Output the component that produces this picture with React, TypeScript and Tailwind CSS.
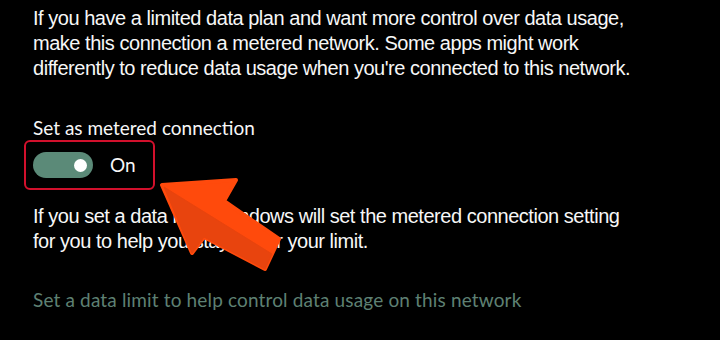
export default function App() {
  return (
    <div className="relative w-[720px] h-[340px] overflow-hidden bg-black pl-[33px] pt-[6px] text-[#f7f7f7]">
      {/* description */}
      <p className="font-['Liberation_Sans',sans-serif] text-[20px] leading-[25px] tracking-[-0.47px]">
        If you have a limited data plan and want more control over data usage,
        <br />
        make this connection a metered network. Some apps might work
        <br />
        differently to reduce data usage when you're connected to this network.
      </p>

      <div className="mt-[34px] font-['Lato',sans-serif] text-[19px] leading-[25px]">Set as metered connection</div>

      {/* toggle, highlighted */}
      <div className="-ml-[9px] flex h-[50px] w-[131px] items-center gap-[17px] rounded-[6px] border-2 border-[#d2102c] pl-[7px]">
        <div className="flex h-[26px] w-[60px] items-center justify-end rounded-full bg-[#5b8a78] pr-[6px]">
          <div className="h-[13px] w-[13px] rounded-full bg-white" />
        </div>
        <span className="font-['Lato',sans-serif] text-[19px]">On</span>
      </div>

      <p className="mt-[14px] font-['Liberation_Sans',sans-serif] text-[20px] leading-[25px] tracking-[-0.47px]">
        If you set a data limit, Windows will set the metered connection setting
        <br />
        for you to help you stay under your limit.
      </p>

      <div className="mt-[33px] font-['Lato',sans-serif] text-[19px] leading-[25px] tracking-[0.15px] text-[#5e8073]">
        Set a data limit to help control data usage on this network
      </div>

      {/* annotation arrow */}
      <svg className="absolute left-0 top-0" width="720" height="340" viewBox="0 0 720 340">
        <polygon
          points="162,185 236,180 224,201 279,239 265,269 204,237 192,253"
          fill="#ff4a0c"
          stroke="#ff4a0c"
          strokeWidth="4"
          strokeLinejoin="round"
        />
        <polygon points="164,187 272,254 265,269 204,237 192,253" fill="#e8440e" stroke="#e8440e" strokeWidth="1" strokeLinejoin="round" />
      </svg>
    </div>
  );
}
